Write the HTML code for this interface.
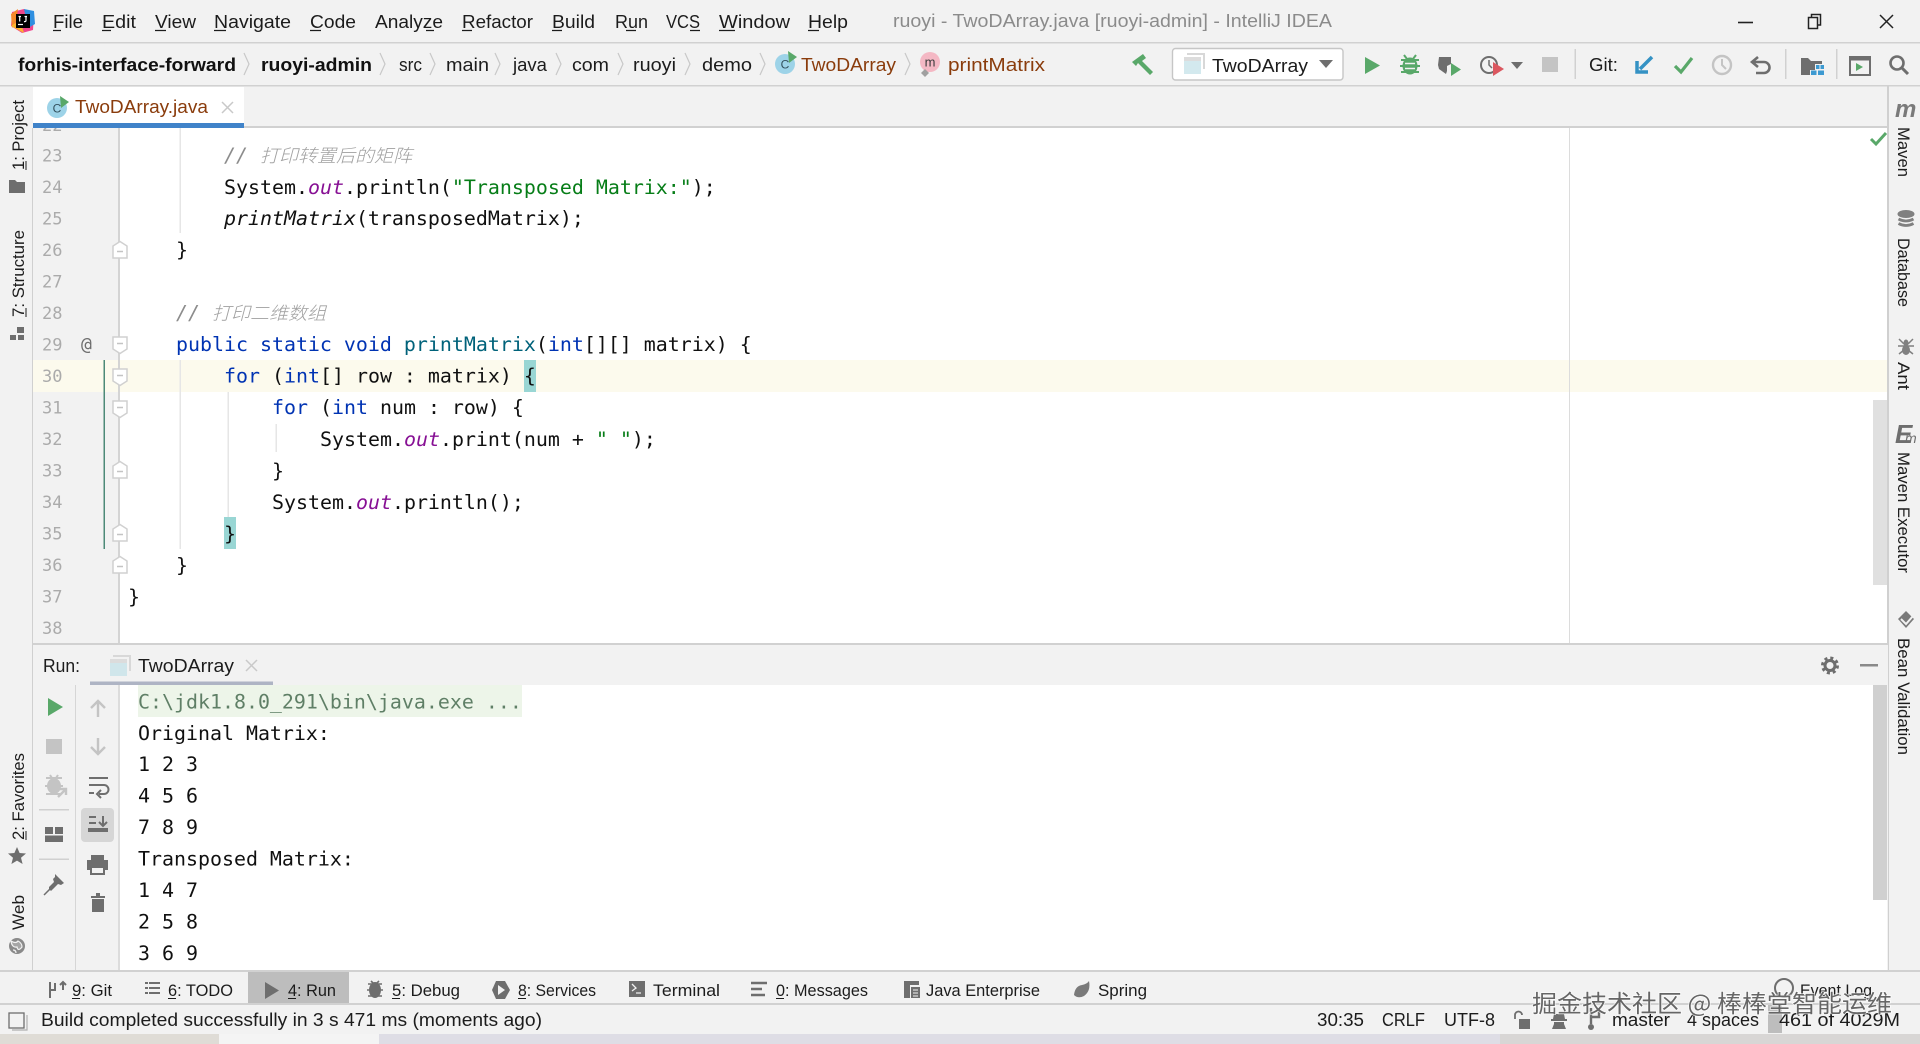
<!DOCTYPE html>
<html lang="en"><head><meta charset="utf-8"><title>TwoDArray.java - IntelliJ IDEA</title>
<style>
html,body{margin:0;padding:0;background:#f2f2f2;width:1920px;height:1044px;overflow:hidden}
svg{display:block}
.u{font-family:"Liberation Sans","Noto Sans CJK SC",sans-serif;font-size:18px;fill:#1c1c1c}
.s{font-size:16.5px}
.b{font-weight:bold;fill:#111}
.br{fill:#8a3c0c}
.m{font-family:"DejaVu Sans Mono","Liberation Mono",monospace;font-size:19.93px;fill:#101010;white-space:pre}
.n{font-family:"DejaVu Sans Mono","Liberation Mono",monospace;font-size:17px;fill:#ababab}
.k{fill:#0033b3}.f{fill:#871094;font-style:italic}.g{fill:#067d17}.t{fill:#00627a}.i{font-style:italic}
.c{fill:#8c8c8c;font-style:italic}
.z{font-family:"Noto Sans CJK SC","WenQuanYi Zen Hei",sans-serif;font-size:18px;font-style:italic;fill:#a0a0a0;font-weight:300}
.w{font-family:"Noto Sans CJK SC","Liberation Sans",sans-serif;font-size:24px;fill:#666;paint-order:stroke;stroke:#fff;stroke-width:1.5px;stroke-opacity:.75}
</style></head><body>
<svg xmlns="http://www.w3.org/2000/svg" width="1920" height="1044" viewBox="0 0 1920 1044" xml:space="preserve">
<defs>
<g id="fs"><path d="M-7-8H7V4L0 8.500-7 4Z" fill="#fff" stroke="#d0d0d0" stroke-width="1.500"/><path d="M-3-1.500H3" stroke="#c4c4c4" stroke-width="1.500"/></g>
<g id="fe"><path d="M-7 8H7V-4L0-8.500-7-4Z" fill="#fff" stroke="#d0d0d0" stroke-width="1.500"/><path d="M-3 1.500H3" stroke="#c4c4c4" stroke-width="1.500"/></g>
<g id="app"><rect x="0" y="3" width="17" height="17" fill="#c4e2e8" opacity=".75"/><path d="M3 0H20V15" fill="none" stroke="#d8d8d8" stroke-width="2"/><rect x="0" y="3" width="17" height="4" fill="#dcdcdc"/></g>
</defs>
<rect width="1920" height="1044" fill="#f2f2f2"/>

<!-- editor -->
<rect x="120" y="128" width="1768" height="516" fill="#fff"/>
<rect x="33" y="360" width="1855" height="32" fill="#fcfaed"/>
<rect x="118" y="128" width="2" height="516" fill="#d4d4d4"/>
<rect x="1569" y="128" width="1" height="516" fill="#dcdcdc"/>
<rect x="32" y="86" width="1" height="886" fill="#d0d0d0"/>
<rect x="103.500" y="360" width="1.500" height="189" fill="#4d8a78"/>
<g fill="#e6e6e6">
<rect x="179.500" y="128" width="1.500" height="105"/><rect x="179.500" y="360" width="1.500" height="189"/>
<rect x="227.500" y="392" width="1.500" height="125"/><rect x="275.500" y="424" width="1.500" height="28"/>
</g>
<rect x="524" y="360" width="12" height="32" fill="#99d6d4"/>
<rect x="224" y="517" width="12" height="32" fill="#99d6d4"/>

<g class="n">
<text x="42" y="131">22</text><text x="42" y="161.500">23</text><text x="42" y="193">24</text><text x="42" y="224.500">25</text><text x="42" y="256">26</text><text x="42" y="287.500">27</text><text x="42" y="319">28</text><text x="42" y="350.500">29</text><text x="42" y="382">30</text><text x="42" y="413.500">31</text><text x="42" y="445">32</text><text x="42" y="476.500">33</text><text x="42" y="508">34</text><text x="42" y="539.500">35</text><text x="42" y="571">36</text><text x="42" y="602.500">37</text><text x="42" y="634">38</text>
</g>
<text x="81" y="350" font-family="DejaVu Sans Mono,monospace" font-size="18" fill="#6e6e6e">@</text>
<use href="#fe" x="120" y="250"/><use href="#fs" x="120" y="345"/><use href="#fs" x="120" y="377"/><use href="#fs" x="120" y="409"/><use href="#fe" x="120" y="470"/><use href="#fe" x="120" y="533"/><use href="#fe" x="120" y="565"/>

<text class="m c" x="224" y="162">//</text><text class="z" x="260" y="162" textLength="152" lengthAdjust="spacingAndGlyphs">打印转置后的矩阵</text>
<text class="m" x="224" y="194">System.<tspan class="f">out</tspan>.println(<tspan class="g">"Transposed Matrix:"</tspan>);</text>
<text class="m" x="224" y="225"><tspan class="i">printMatrix</tspan>(transposedMatrix);</text>
<text class="m" x="176" y="256.600">}</text>
<text class="m c" x="176" y="319.700">//</text><text class="z" x="212" y="319.700" textLength="114" lengthAdjust="spacingAndGlyphs">打印二维数组</text>
<text class="m" x="176" y="351.200"><tspan class="k">public static void</tspan> <tspan class="t">printMatrix</tspan>(<tspan class="k">int</tspan>[][] matrix) {</text>
<text class="m" x="224" y="382.700"><tspan class="k">for</tspan> (<tspan class="k">int</tspan>[] row : matrix) {</text>
<text class="m" x="272" y="414.200"><tspan class="k">for</tspan> (<tspan class="k">int</tspan> num : row) {</text>
<text class="m" x="320" y="445.800">System.<tspan class="f">out</tspan>.print(num + <tspan class="g">" "</tspan>);</text>
<text class="m" x="272" y="477.300">}</text>
<text class="m" x="272" y="508.800">System.<tspan class="f">out</tspan>.println();</text>
<text class="m" x="224" y="540.400">}</text>
<text class="m" x="176" y="571.900">}</text>
<text class="m" x="128" y="603.400">}</text>
<path d="M1871 139l5 5 10-11" fill="none" stroke="#59a869" stroke-width="3"/>
<rect x="1873" y="400" width="14" height="185" fill="#e0e0e0"/>

<!-- title bar -->
<rect width="1920" height="42" fill="#f2f2f2"/><rect y="42" width="1920" height="1.500" fill="#d1d1d1"/>
<g>
<path d="M12 12L24 9 34 14 33 30 22 33 11 26Z" fill="#f0468c"/>
<path d="M24 9L34 11 35 24 28 28Z" fill="#2f8fe0"/>
<path d="M11 14L18 9 16 22 12 28Z" fill="#f58a2a"/>
<path d="M11 26L20 20 24 33Z" fill="#fcb42d"/>
<rect x="16" y="14" width="14" height="14" fill="#000"/>
<path d="M18 24.500H23" stroke="#fff" stroke-width="1.200"/>
<path d="M18.500 16.500H21M19.700 16.500V21.500M24.500 16.500H27M26 16.500V20.500Q26 22 24 21.500" stroke="#fff" stroke-width="1.200" fill="none"/>
</g>
<g class="u">
<text x="53" y="28" textLength="30" lengthAdjust="spacingAndGlyphs">File</text>
<text x="102" y="28" textLength="34" lengthAdjust="spacingAndGlyphs">Edit</text>
<text x="155" y="28" textLength="41" lengthAdjust="spacingAndGlyphs">View</text>
<text x="214" y="28" textLength="77" lengthAdjust="spacingAndGlyphs">Navigate</text>
<text x="310" y="28" textLength="46" lengthAdjust="spacingAndGlyphs">Code</text>
<text x="375" y="28" textLength="68" lengthAdjust="spacingAndGlyphs">Analyze</text>
<text x="462" y="28" textLength="71" lengthAdjust="spacingAndGlyphs">Refactor</text>
<text x="552" y="28" textLength="43" lengthAdjust="spacingAndGlyphs">Build</text>
<text x="615" y="28" textLength="33" lengthAdjust="spacingAndGlyphs">Run</text>
<text x="666" y="28" textLength="34" lengthAdjust="spacingAndGlyphs">VCS</text>
<text x="719" y="28" textLength="71" lengthAdjust="spacingAndGlyphs">Window</text>
<text x="808" y="28" textLength="40" lengthAdjust="spacingAndGlyphs">Help</text>
</g>
<path d="M53 30.500h8M102 30.500h9M155 30.500h11M214 30.500h12M310 30.500h11M426 30.500h8M462 30.500h10M552 30.500h10M626 30.500h10M690 30.500h10M719 30.500h16M808 30.500h11" stroke="#1c1c1c" stroke-width="1.200"/>
<text class="u" x="893" y="27" textLength="439" lengthAdjust="spacingAndGlyphs" style="fill:#8b8b8b">ruoyi - TwoDArray.java [ruoyi-admin] - IntelliJ IDEA</text>
<path d="M1738 22.500h15" stroke="#222" stroke-width="1.600"/>
<path d="M1808.500 17.500h9v11h-9zM1811.500 17.500v-3h9v10.500h-3" fill="none" stroke="#222" stroke-width="1.500"/>
<path d="M1880 15l13 13M1893 15l-13 13" stroke="#222" stroke-width="1.500"/>

<!-- nav bar -->
<rect y="85" width="1920" height="1.500" fill="#d1d1d1"/>
<g class="u">
<text class="u b" x="18" y="71" textLength="218" lengthAdjust="spacingAndGlyphs">forhis-interface-forward</text>
<text class="u b" x="261" y="71" textLength="111" lengthAdjust="spacingAndGlyphs">ruoyi-admin</text>
<text x="399" y="71" textLength="23" lengthAdjust="spacingAndGlyphs">src</text>
<text x="446" y="71" textLength="43" lengthAdjust="spacingAndGlyphs">main</text>
<text x="513" y="71" textLength="34" lengthAdjust="spacingAndGlyphs">java</text>
<text x="572" y="71" textLength="37" lengthAdjust="spacingAndGlyphs">com</text>
<text x="633" y="71" textLength="43" lengthAdjust="spacingAndGlyphs">ruoyi</text>
<text x="702" y="71" textLength="50" lengthAdjust="spacingAndGlyphs">demo</text>
<text class="u br" x="801" y="71" textLength="95" lengthAdjust="spacingAndGlyphs">TwoDArray</text>
<text class="u br" x="948" y="71" textLength="97" lengthAdjust="spacingAndGlyphs">printMatrix</text>
</g>
<path d="M244 53l5 11-5 11M380 53l5 11-5 11M430 53l5 11-5 11M495 53l5 11-5 11M556 53l5 11-5 11M618 53l5 11-5 11M685 53l5 11-5 11M760 53l5 11-5 11M905 53l5 11-5 11" fill="none" stroke="#c8c8c8" stroke-width="1.200"/>
<circle cx="785" cy="64" r="10" fill="#9dd3e8"/><text x="785" y="68.500" text-anchor="middle" font-family="Liberation Sans" font-size="12" fill="#33515e">C</text><path d="M788 51l9 6-8 6z" fill="#59a869"/>
<circle cx="930" cy="62" r="10" fill="#f4b8c4"/><text x="930" y="66.500" text-anchor="middle" font-family="Liberation Sans" font-size="13" fill="#3a3a3a">m</text><path d="M921 73l4-4 4 4-4 4z" fill="#a0a0a0"/>

<!-- toolbar -->
<path d="M1132 62L1143 54 1146 58 1142 61 1153 72 1150 75 1138 63 1136 66Z" fill="#59a869"/>
<rect x="1172.500" y="48.500" width="170.500" height="31.500" rx="3" fill="#fff" stroke="#c6c6c6" stroke-width="1.400"/>
<use href="#app" x="1184" y="54"/>
<text class="u" x="1212" y="72" textLength="96" lengthAdjust="spacingAndGlyphs">TwoDArray</text>
<path d="M1319 60h14l-7 8z" fill="#6e6e6e"/>
<path d="M1365 57l15 8.500-15 8.500z" fill="#59a869"/>
<g fill="#59a869"><ellipse cx="1410" cy="66" rx="7.500" ry="8.500"/><path d="M1401 60l18 0M1400 66h20M1401 72h18M1404 55l3 4M1416 55l-3 4" stroke="#59a869" stroke-width="2"/></g><path d="M1405 63.500h10M1405 68.500h10" stroke="#f2f2f2" stroke-width="1.600"/>
<path d="M1439 57h12v7l-4 2v5l-1 3-7-5-1-4z" fill="#6e6e6e"/><path d="M1451 63l10 6.500-10 6.500z" fill="#59a869"/>
<circle cx="1489" cy="65" r="8" fill="none" stroke="#6e6e6e" stroke-width="2"/><path d="M1489 60v5l3 3" fill="none" stroke="#6e6e6e" stroke-width="1.500"/><path d="M1493 62l11 7-11 7z" fill="#db5860"/>
<path d="M1511 62h12l-6 7z" fill="#6e6e6e"/>
<rect x="1542" y="57" width="16" height="15" fill="#c4c4c4"/>
<rect x="1574.500" y="49" width="1.500" height="30" fill="#d1d1d1"/><rect x="1785" y="49" width="1.500" height="30" fill="#d1d1d1"/><rect x="1836" y="49" width="1.500" height="30" fill="#d1d1d1"/>
<text class="u" x="1589" y="71" textLength="29" lengthAdjust="spacingAndGlyphs">Git:</text>
<path d="M1652 57l-12 12M1637 61v11h11" fill="none" stroke="#3592c4" stroke-width="3.500"/>
<path d="M1675 66l6 6 11-14" fill="none" stroke="#59a869" stroke-width="3.200"/>
<circle cx="1722" cy="65" r="9" fill="none" stroke="#c4c4c4" stroke-width="2.400"/><path d="M1722 59v6l4 4" fill="none" stroke="#c4c4c4" stroke-width="2"/>
<path d="M1758 57l-6 5 6 5M1753 62h11a5.500 5.500 0 0 1 0 11h-8" fill="none" stroke="#6e6e6e" stroke-width="2.600"/>
<path d="M1801 58h7l3 3h11v3h-7v6h-5v5h-9z" fill="#6e6e6e"/><g fill="#3d9ad1"><rect x="1816" y="65" width="3.500" height="4"/><rect x="1820.500" y="65" width="3.500" height="4"/><rect x="1811" y="70.500" width="5.500" height="4.500"/><rect x="1818" y="70.500" width="6" height="4.500"/></g>
<rect x="1850" y="57" width="20" height="18" fill="none" stroke="#6e6e6e" stroke-width="2"/><rect x="1850" y="57" width="20" height="3.500" fill="#6e6e6e"/><path d="M1856 63l7 4-7 4z" fill="#59a869"/>
<circle cx="1897" cy="63" r="6.500" fill="none" stroke="#6e6e6e" stroke-width="2.600"/><path d="M1902 68l6 6" stroke="#6e6e6e" stroke-width="3"/>

<!-- tab bar -->
<rect y="86.500" width="1888" height="41.500" fill="#f2f2f2"/>
<rect x="33" y="126" width="1855" height="2" fill="#d1d1d1"/>
<rect x="33" y="87" width="211" height="36" fill="#fff"/>
<rect x="33" y="123" width="211" height="5" fill="#4083c9"/>
<circle cx="57" cy="108" r="10" fill="#9dd3e8"/><text x="57" y="112.500" text-anchor="middle" font-family="Liberation Sans" font-size="12" fill="#33515e">C</text><path d="M60 96l9 6-8 6z" fill="#59a869"/>
<text class="u br" x="75" y="113" textLength="133" lengthAdjust="spacingAndGlyphs">TwoDArray.java</text>
<path d="M222 102l11 11M233 102l-11 11" stroke="#c9c9c9" stroke-width="1.500"/>

<!-- left strip -->
<g class="u s">
<text transform="translate(24,170) rotate(-90)" textLength="70" lengthAdjust="spacingAndGlyphs">1: Project</text>
<text transform="translate(24,317) rotate(-90)" textLength="87" lengthAdjust="spacingAndGlyphs">7: Structure</text>
<text transform="translate(24,840) rotate(-90)" textLength="87" lengthAdjust="spacingAndGlyphs">2: Favorites</text>
<text transform="translate(24,930) rotate(-90)" textLength="35" lengthAdjust="spacingAndGlyphs">Web</text>
</g>
<path d="M26 170v-9M26 317v-9M26 840v-9" stroke="#1c1c1c" stroke-width="1"/>
<path d="M9 180h6l2 2h8v11H9z" fill="#6e6e6e"/>
<g fill="#6e6e6e"><rect x="17" y="327" width="7" height="6"/><rect x="10" y="335" width="6" height="5"/><rect x="18" y="335" width="6" height="5"/></g>
<path d="M17 847l2.600 6 6.400.500-5 4.200 1.600 6.300-5.600-3.400-5.600 3.400 1.600-6.300-5-4.200 6.400-.500z" fill="#6e6e6e"/>
<circle cx="17" cy="946" r="8" fill="#8a8a8a"/><path d="M11 941q5 3 7 0 4 2 4 6-4 5-5 0-5 1-6-6M13 950q3 0 3 3" fill="#a6a6a6" stroke="#f2f2f2" stroke-width="1.200"/>

<!-- right strip -->
<rect x="1887" y="86" width="2" height="886" fill="#d0d0d0"/>
<g class="u s">
<text transform="translate(1898,127) rotate(90)" textLength="50" lengthAdjust="spacingAndGlyphs">Maven</text>
<text transform="translate(1898,238) rotate(90)" textLength="69" lengthAdjust="spacingAndGlyphs">Database</text>
<text transform="translate(1898,362) rotate(90)" textLength="28" lengthAdjust="spacingAndGlyphs">Ant</text>
<text transform="translate(1898,452) rotate(90)" textLength="121" lengthAdjust="spacingAndGlyphs">Maven Executor</text>
<text transform="translate(1898,638) rotate(90)" textLength="117" lengthAdjust="spacingAndGlyphs">Bean Validation</text>
</g>
<text x="1895" y="117" font-family="Liberation Sans" font-size="24" font-weight="bold" font-style="italic" fill="#7a7a7a">m</text>
<g fill="none" stroke="#808080"><ellipse cx="1906" cy="214" rx="7.500" ry="3" stroke-width="2" fill="#808080"/><path d="M1898.500 219q7.500 4 15 0M1898.500 223.500q7.500 4 15 0" stroke-width="2.800"/></g>
<g fill="#808080"><ellipse cx="1906" cy="343" rx="2.500" ry="3.500"/><ellipse cx="1906" cy="350" rx="4" ry="5"/></g><path d="M1899 339l5 5M1913 339l-5 5M1898 346h16M1899 354l5-4M1913 354l-5-4" stroke="#808080" stroke-width="1.500"/>
<text x="1895" y="443" font-family="Liberation Sans" font-size="26" font-weight="bold" font-style="italic" fill="#6e6e6e">E</text><text x="1905" y="443" font-family="Liberation Sans" font-size="14" font-style="italic" fill="#6e6e6e">m</text>
<path d="M1906 611l8 8-8 9-8-9z" fill="#7a7a7a"/><path d="M1901 619l5 5 7-8" fill="none" stroke="#f2f2f2" stroke-width="2"/>

<!-- run panel -->
<rect x="33" y="644" width="1855" height="326" fill="#f2f2f2"/>
<rect x="33" y="643" width="1855" height="2" fill="#d1d1d1"/>
<rect x="120" y="685" width="1753" height="285" fill="#fff"/>
<rect x="1873" y="685" width="14" height="285" fill="#fff"/>
<rect x="1873" y="685" width="14" height="215" fill="#d0d0d0"/>
<rect x="118" y="685" width="2" height="285" fill="#dcdcdc"/>
<rect x="75" y="685" width="1" height="285" fill="#d6d6d6"/>
<text class="u" x="43" y="672" textLength="37" lengthAdjust="spacingAndGlyphs">Run:</text>
<use href="#app" x="110" y="656"/>
<text class="u" x="138" y="672" textLength="96" lengthAdjust="spacingAndGlyphs">TwoDArray</text>
<path d="M246 660l11 11M257 660l-11 11" stroke="#c9c9c9" stroke-width="1.500"/>
<rect x="90" y="681.500" width="183" height="3.500" fill="#aeb4c4"/>
<circle cx="1830" cy="665.500" r="5" fill="none" stroke="#6e6e6e" stroke-width="3"/><circle cx="1830" cy="665.500" r="7.500" fill="none" stroke="#6e6e6e" stroke-width="3" stroke-dasharray="3 2.900"/>
<rect x="1860" y="664" width="18" height="2.500" fill="#8a8a8a"/>

<rect x="138" y="685" width="384" height="32" fill="#edf5e9"/>
<text class="m" x="138" y="708.500" style="fill:#5f7f66">C:\jdk1.8.0_291\bin\java.exe ...</text>
<text class="m" x="138" y="740">Original Matrix:</text>
<text class="m" x="138" y="771">1 2 3</text>
<text class="m" x="138" y="802.500">4 5 6</text>
<text class="m" x="138" y="834">7 8 9</text>
<text class="m" x="138" y="865.500">Transposed Matrix:</text>
<text class="m" x="138" y="897">1 4 7</text>
<text class="m" x="138" y="928.500">2 5 8</text>
<text class="m" x="138" y="960">3 6 9</text>

<!-- run toolbar -->
<path d="M48 698l15 9-15 9z" fill="#59a869"/>
<rect x="46" y="739" width="16" height="15" fill="#c4c4c4"/>
<ellipse cx="54" cy="786" rx="7" ry="8" fill="#c4c4c4"/><path d="M46 778l16 0M45 786h18M46 794h14M50 775l2 3M58 775l-2 3" stroke="#c4c4c4" stroke-width="2"/><path d="M58 797l8-8M66 795v-6h-6" stroke="#c4c4c4" stroke-width="2.400" fill="none"/>
<rect x="39" y="809" width="30" height="1.500" fill="#d0d0d0"/>
<g fill="#6e6e6e"><rect x="45" y="827" width="8" height="7"/><rect x="55" y="827" width="8" height="7"/><rect x="45" y="835.500" width="18" height="6.500"/></g>
<rect x="39" y="858.500" width="30" height="1.500" fill="#d0d0d0"/>
<path d="M55 874l9 9-3 2-3-1-5 5-2 2-2-2 0-2 5-5-1-3 2-2z" fill="#6e6e6e"/><path d="M44 895l7-7" stroke="#6e6e6e" stroke-width="1.500"/>

<path d="M98 717v-15M91 708l7-7 7 7" fill="none" stroke="#c4c4c4" stroke-width="2.400"/>
<path d="M98 738v15M91 747l7 7 7-7" fill="none" stroke="#c4c4c4" stroke-width="2.400"/>
<path d="M89 778h19M89 785h15a4 4 0 0 1 0 9h-5M101 790l-4 4 4 4M89 793h5" fill="none" stroke="#6e6e6e" stroke-width="2"/>
<rect x="81" y="808" width="33" height="34" rx="4" fill="#d6d6d6"/>
<path d="M89 817h7M89 823h7M89 829h18v2H89z" stroke="#6e6e6e" stroke-width="2" fill="none"/><path d="M103 816v10M99 822l4 4 4-4" stroke="#6e6e6e" stroke-width="2" fill="none"/>
<path d="M91 855h13v5h4v10h-4v-4H91v4h-4v-10h4z" fill="#6e6e6e"/><rect x="91" y="867" width="13" height="7" fill="#f2f2f2" stroke="#6e6e6e" stroke-width="2"/>
<path d="M91 896h5v-3h4v3h5v2H91zM92 899h12v13H92z" fill="#6e6e6e"/>

<!-- bottom tool bar -->
<rect y="970" width="1920" height="2" fill="#d1d1d1"/>
<rect y="1003" width="1920" height="2" fill="#d1d1d1"/>
<rect x="248" y="972" width="101" height="31" fill="#bdbdbd"/>
<g class="u s">
<text x="72" y="996" textLength="40" lengthAdjust="spacingAndGlyphs">9: Git</text>
<text x="168" y="996" textLength="65" lengthAdjust="spacingAndGlyphs">6: TODO</text>
<text x="288" y="996" textLength="48" lengthAdjust="spacingAndGlyphs">4: Run</text>
<text x="392" y="996" textLength="68" lengthAdjust="spacingAndGlyphs">5: Debug</text>
<text x="518" y="996" textLength="78" lengthAdjust="spacingAndGlyphs">8: Services</text>
<text x="653" y="996" textLength="67" lengthAdjust="spacingAndGlyphs">Terminal</text>
<text x="776" y="996" textLength="92" lengthAdjust="spacingAndGlyphs">0: Messages</text>
<text x="926" y="996" textLength="114" lengthAdjust="spacingAndGlyphs">Java Enterprise</text>
<text x="1098" y="996" textLength="49" lengthAdjust="spacingAndGlyphs">Spring</text>
<text x="1800" y="996" textLength="72" lengthAdjust="spacingAndGlyphs">Event Log</text>
</g>
<path d="M72 998.500h8M168 998.500h8M288 998.500h8M392 998.500h8M518 998.500h8M776 998.500h8" stroke="#1c1c1c" stroke-width="1"/>
<path d="M50 982v16M50 990h5l0-7M51 990h3M60 985l3-3 3 3M63 982v8" fill="none" stroke="#6e6e6e" stroke-width="2"/>
<path d="M145 983h15M145 988h15M145 993h15" stroke="#6e6e6e" stroke-width="2" stroke-dasharray="3 1 11"/>
<path d="M265 982l14 8.500-14 8.500z" fill="#6e6e6e"/>
<ellipse cx="375" cy="990" rx="6" ry="8" fill="#6e6e6e"/><path d="M368 984h14M367 990h16M368 996h14M371 981l2 2M379 981l-2 2" stroke="#6e6e6e" stroke-width="1.600"/>
<path d="M496 981h9l5 9-5 9h-9l-4-9z" fill="#6e6e6e"/><path d="M498 985l7 5-7 5z" fill="#f2f2f2"/>
<rect x="629" y="981" width="16" height="16" fill="#6e6e6e"/><path d="M632 984l4 4-4 3M636 993h5" stroke="#f2f2f2" stroke-width="1.300" fill="none"/>
<path d="M751 983h16M751 989h11M751 995h14" stroke="#6e6e6e" stroke-width="2.400"/>
<path d="M904 981h15v4h-9v13h-6z" fill="#6e6e6e"/><rect x="911" y="987" width="9" height="11" fill="#6e6e6e"/><path d="M913 990h5M913 993h5M913 996h5" stroke="#f2f2f2"/>
<path d="M1089 981q2 10-5 15-6 3-10-1 1-9 8-10 5-1 7-4z" fill="#7a7a7a"/>
<circle cx="1784" cy="988" r="9" fill="none" stroke="#6e6e6e" stroke-width="2"/>

<!-- status bar -->
<rect y="1005" width="1920" height="29" fill="#f2f2f2"/>
<rect x="9" y="1013" width="15" height="15" fill="none" stroke="#6e6e6e" stroke-width="1.300"/><path d="M12 1030h15v-15" fill="none" stroke="#b0b0b0" stroke-width="1.200"/>
<text class="u" x="41" y="1026" textLength="501" lengthAdjust="spacingAndGlyphs">Build completed successfully in 3 s 471 ms (moments ago)</text>
<rect x="1768" y="1005" width="14" height="28" fill="#bdbdbd"/>
<g class="u">
<text x="1317" y="1026" textLength="47" lengthAdjust="spacingAndGlyphs">30:35</text>
<text x="1382" y="1026" textLength="43" lengthAdjust="spacingAndGlyphs">CRLF</text>
<text x="1444" y="1026" textLength="51" lengthAdjust="spacingAndGlyphs">UTF-8</text>
<text x="1612" y="1026" textLength="58" lengthAdjust="spacingAndGlyphs">master</text>
<text x="1687" y="1026" textLength="72" lengthAdjust="spacingAndGlyphs">4 spaces</text>
<text x="1779" y="1026" textLength="121" lengthAdjust="spacingAndGlyphs">461 of 4029M</text>
</g>
<rect x="1519" y="1019" width="11" height="10" fill="#6e6e6e"/><path d="M1515 1019v-4a3.500 3.500 0 0 1 7 0" fill="none" stroke="#6e6e6e" stroke-width="1.800"/>
<path d="M1554 1014h10l1 5h2v2h-16v-2h2zM1554 1022h10v2l2 5h-14l2-5z" fill="#6e6e6e"/>
<path d="M1591 1008v16M1591 1017h8v-9" fill="none" stroke="#6e6e6e" stroke-width="2.400"/><circle cx="1591" cy="1027" r="3" fill="#6e6e6e"/>
<rect y="1034" width="1920" height="10" fill="#dedde5"/>
<rect y="1034" width="219" height="10" fill="#dfdcd6"/><rect x="219" y="1034" width="160" height="10" fill="#f4f4f4"/>
<rect x="1500" y="1034" width="420" height="10" fill="#d8d6d5"/>

<!-- watermark -->
<text class="w" x="1532" y="1012" textLength="360" lengthAdjust="spacingAndGlyphs">掘金技术社区 @ 棒棒堂智能运维</text>
</svg>
</body></html>
